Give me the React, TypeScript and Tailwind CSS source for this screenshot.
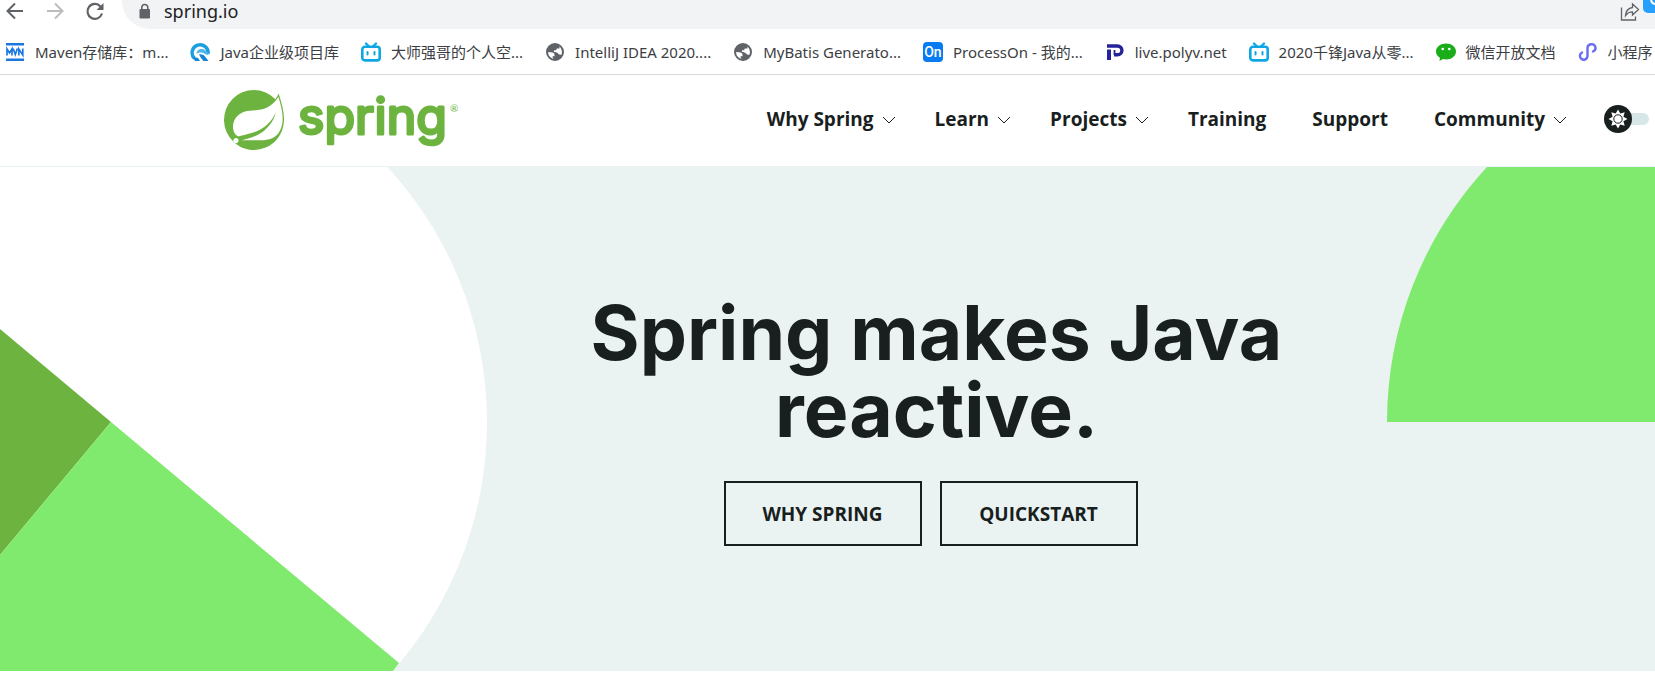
import React from "react";

const MavenIcon = () => (
  <svg viewBox="0 0 20 20" className="size-5" aria-hidden="true">
    <path d="M1 1h18v2.500H1zM1 16.500h18V19H1z" fill="#1a78e0" />
    <path d="M2 13.500V7l2.500 4L7 7v6.500M8.200 6.500l2.100 6 2.100-6M13.800 13.500V7l4 6V6.500" fill="none" stroke="#1a78e0" strokeWidth="1.700" />
  </svg>
);

const JavaProjectIcon = () => (
  <svg viewBox="0 0 20 20" className="size-5" aria-hidden="true">
    <path d="M4.500 16.500A8 8 0 1 1 18 12" fill="none" stroke="#1a9fdf" strokeWidth="3.400" />
    <path d="M6.500 12a5 5 0 0 1 6-5c3 .7 4 3 6.500 4l-1 2c-3-.5-5-3-8-2.500-2 .3-3 1-3.500 1.500z" fill="#4ab6ea" />
    <path d="M9 12.500c2-.8 4.500 0 6 2l3.500 4.500h-5L11 16z" fill="#1583d6" />
    <path d="M3 15l5 1 2 3H5z" fill="#1583d6" />
  </svg>
);

const BilibiliIcon = () => (
  <svg viewBox="0 0 20 20" className="size-5" fill="none" stroke="#0fa7e3" aria-hidden="true">
    <rect x="1.300" y="4.800" width="17.400" height="13.600" rx="2.600" strokeWidth="2.600" />
    <path d="M5 1.500l3 3M15 1.500l-3 3" strokeWidth="2.400" strokeLinecap="round" />
    <path d="M6.500 10v2.500M13.500 10v2.500" strokeWidth="2" strokeLinecap="round" />
  </svg>
);

const GlobeIcon = () => (
  <svg viewBox="0 0 20 20" className="size-5" aria-hidden="true">
    <circle cx="10" cy="10" r="8" fill="#fff" stroke="#5f6368" strokeWidth="2" />
    <path d="M10 2a8 8 0 0 0-8 8l4 .3c2.500.2 3.500 1 3.500 2.500v1.500H7.500c0 1.500 1 3.200 3 3.700 3.500-.5 6-2.500 7-5.500-1.500.5-3.500.3-4.500-1-.8-1-2-1.500-4-1.500V8.300c2 0 2.800-.5 2.800-1.800h2.700V4.500C13.500 3 12 2 10 2z" fill="#5f6368" />
  </svg>
);

const ProcessOnIcon = () => (
  <span className="flex size-5 items-center justify-center rounded-sm bg-[#067bf2] font-['Roboto',sans-serif] text-sm leading-5 font-medium text-white" aria-hidden="true">
    On
  </span>
);

const PolyvIcon = () => (
  <svg viewBox="0 0 20 20" className="size-5" fill="none" stroke="#23239a" aria-hidden="true">
    <path d="M2 4H12.500a4.300 4.300 0 0 1 0 8.800H9" strokeWidth="3.400" />
    <path d="M4 7.500V18" strokeWidth="4" />
    <path d="M9.500 8v5" strokeWidth="1.800" />
  </svg>
);

const WechatIcon = () => (
  <svg viewBox="0 0 20 20" className="size-5" aria-hidden="true">
    <path d="M10 1.500c5.500 0 10 3.500 10 8s-4.500 8-10 8c-1 0-2-.1-3-.4L3.500 19l.4-3.200C1.500 14.300 0 12.200 0 9.500c0-4.500 4.500-8 10-8z" fill="#1aad19" />
    <circle cx="6.700" cy="7" r="1.300" fill="#fff" />
    <circle cx="13.300" cy="7" r="1.300" fill="#fff" />
  </svg>
);

const MiniProgramIcon = () => (
  <svg viewBox="0 0 20 20" className="size-5" aria-hidden="true">
    <path d="M4 10.500A3.800 3.800 0 1 0 9.500 14.200V5.800A4 3.800 0 1 1 15 9.500" fill="none" stroke="#6a6cf0" strokeWidth="2.400" strokeLinecap="round" />
  </svg>
);

const bookmarks: { label: string; icon: React.ReactNode }[] = [
  { label: "Maven存储库：m...", icon: <MavenIcon /> },
  { label: "Java企业级项目库", icon: <JavaProjectIcon /> },
  { label: "大师强哥的个人空...", icon: <BilibiliIcon /> },
  { label: "IntelliJ IDEA 2020....", icon: <GlobeIcon /> },
  { label: "MyBatis Generato...", icon: <GlobeIcon /> },
  { label: "ProcessOn - 我的...", icon: <ProcessOnIcon /> },
  { label: "live.polyv.net", icon: <PolyvIcon /> },
  { label: "2020千锋Java从零...", icon: <BilibiliIcon /> },
  { label: "微信开放文档", icon: <WechatIcon /> },
  { label: "小程序", icon: <MiniProgramIcon /> },
];

function BrowserBar() {
  return (
    <div className="relative border-b border-[#d6d8db] bg-white font-['Noto_Sans','Noto_Sans_CJK_SC',sans-serif]">
      <div className="flex h-[29px] items-start pl-1">
        <button type="button" aria-label="Back" className="flex h-[22px] w-10 items-center pl-px text-[#5f6368]">
          <svg viewBox="0 0 20 20" className="size-5" fill="none" stroke="currentColor" strokeWidth="2">
            <path d="M18 10H3M10 2.500L2.500 10l7.500 7.500" />
          </svg>
        </button>
        <button type="button" aria-label="Forward" className="flex h-[22px] w-10 items-center pl-px text-[#babcbe]">
          <svg viewBox="0 0 20 20" className="size-5" fill="none" stroke="currentColor" strokeWidth="2">
            <path d="M2 10h15M10 2.500l7.500 7.500-7.500 7.500" />
          </svg>
        </button>
        <button type="button" aria-label="Reload" className="flex h-[22px] w-[38px] items-center pl-px text-[#5f6368]">
          <svg viewBox="0 0 20 20" className="size-5" fill="none" stroke="currentColor" strokeWidth="2.200">
            <path d="M17 12.500A7.400 7.400 0 1 1 15.500 5.500" />
            <path d="M18.500 2v7h-7z" fill="currentColor" stroke="none" />
          </svg>
        </button>
        <div className="flex h-[29px] flex-1 items-start gap-3 rounded-bl-[28px] bg-[#f1f3f4] pr-[15px] pl-4">
          <svg viewBox="0 0 14 20" className="mt-px h-5 w-3.5 text-[#5f6368]" aria-hidden="true">
            <rect x="1.500" y="8" width="10.500" height="9.500" rx="1" fill="currentColor" />
            <path d="M3.800 9V6.500a3 3 0 0 1 6 0V9" fill="none" stroke="currentColor" strokeWidth="1.600" />
          </svg>
          <input aria-label="Address" defaultValue="spring.io" className="h-[22px] flex-1 bg-transparent text-lg leading-[22px] text-[#202124] outline-none" />
          <button type="button" aria-label="Share" className="text-[#5f6368]">
            <svg viewBox="0 0 20 20" className="mt-0.5 size-5" fill="none" stroke="currentColor" strokeWidth="1.300">
              <path d="M1.500 5.500v12.500h14v-3.500" />
              <path d="M12.500 2l6 5.500-6 5.500V9.800c-3 0-5 1-7 3.700.3-4.500 3-7.300 7-8z" />
            </svg>
          </button>
        </div>
      </div>
      <svg viewBox="0 0 12 13" className="absolute top-0 right-0 h-[13px] w-3" aria-hidden="true">
        <path d="M0 0H12V13H5A5 5 0 0 1 0 8z" fill="#26a0fc" />
        <path d="M8 0a5 5 0 0 0 4 4" fill="none" stroke="#fff" strokeWidth="2" />
      </svg>
      <nav aria-label="Bookmarks" className="overflow-hidden pl-[5px]">
        <ul className="flex h-[45px] w-max items-center gap-[22px] pt-px text-[15px] text-[#3c4043]">
          {bookmarks.map((b) => (
            <li key={b.label}>
              <a href="#" className="flex items-center gap-2.5 whitespace-nowrap">
                {b.icon}
                {b.label}
              </a>
            </li>
          ))}
        </ul>
      </nav>
    </div>
  );
}

const menu = [
  { label: "Why Spring", dropdown: true },
  { label: "Learn", dropdown: true },
  { label: "Projects", dropdown: true },
  { label: "Training", dropdown: false },
  { label: "Support", dropdown: false },
  { label: "Community", dropdown: true },
];

function SpringLogo() {
  return (
    <svg viewBox="0 0 236 64" className="h-16 w-[236px] overflow-visible" role="img" aria-label="Spring">
      <path
        transform="translate(0 2) scale(2.500)"
        fill="#6db33f"
        d="M21.8537 1.4158a10.4504 10.4504 0 0 1-1.284 2.2471A11.9666 11.9666 0 1 0 3.8518 20.7757l.4445.3951a11.9543 11.9543 0 0 0 19.6316-8.2971c.3457-3.0126-.568-6.8649-2.0742-11.458zM5.5805 20.8745a1.0174 1.0174 0 1 1-.1482-1.4323 1.0396 1.0396 0 0 1 .1482 1.4323zm16.1991-3.5806c-2.9385 3.9263-9.2601 2.5928-13.2852 2.7904 0 0-.7161.0494-1.4323.1481 0 0 .2717-.1234.6174-.2469 2.8398-.9877 4.1732-1.1853 5.9018-2.0743 3.2349-1.6545 6.4698-5.2844 7.1118-9.0379-1.2347 3.6053-4.9881 6.7167-8.3959 7.9761-2.3459.8643-6.5685 1.7039-6.5685 1.7039l-.1729-.0988c-2.8645-1.4076-2.9632-7.6304 2.2718-9.6306 2.2966-.889 4.4696-.395 6.9637-.9877 2.6422-.6174 5.7043-2.5929 6.939-5.1857 1.3828 4.1732 3.062 10.643.0493 14.6434z"
      />
      <text x="74" y="46" className="font-['Inter',sans-serif] text-[50px]" fill="#6db33f" stroke="#6db33f" strokeWidth="3" strokeLinejoin="round">
        spring
      </text>
      <text x="226" y="24" className="font-['Lato',sans-serif] text-[10px]" fill="#6db33f">
        ®
      </text>
    </svg>
  );
}

function Header() {
  return (
    <header className="flex h-[92px] items-center justify-between border-b border-[#ebf2f2] bg-white pr-1.5 pb-1 pl-56 font-['Open_Sans',sans-serif]">
      <a href="#" className="mt-0.5">
        <SpringLogo />
      </a>
      <div className="flex items-center gap-11">
        <nav aria-label="Main" className="pt-0.5">
          <ul className="flex items-center gap-[46px] text-[19px] font-bold text-[#191e1e]">
            {menu.map((m) => (
              <li key={m.label} className={m.dropdown ? "-mr-[7px]" : ""}>
                <a href="#" className="flex items-center gap-2 whitespace-nowrap">
                  {m.label}
                  {m.dropdown && (
                    <svg viewBox="0 0 14 8" className="h-2 w-3.5" fill="none" stroke="#191e1e" aria-hidden="true">
                      <path d="M1 1l6 6 6-6" />
                    </svg>
                  )}
                </a>
              </li>
            ))}
          </ul>
        </nav>
        <label className="flex cursor-pointer items-center">
          <input type="checkbox" role="switch" aria-label="Dark theme" className="sr-only" />
          <span className="flex h-3 w-[45px] items-center rounded-full bg-[#d7e6e6]">
            <svg viewBox="0 0 28 28" className="size-7 shrink-0" aria-hidden="true">
              <circle cx="14" cy="14" r="14" fill="#191e1e" />
              <path d="M14 4.500l2.300 4.100L20.700 7.300l-1.300 4.400L23.500 14l-4.100 2.300L20.700 20.700l-4.400-1.300L14 23.500l-2.300-4.100L7.300 20.700l1.300-4.400L4.500 14l4.100-2.300L7.300 7.300l4.400 1.300z" fill="#fff" />
              <circle cx="14" cy="14" r="4.200" fill="none" stroke="#191e1e" />
            </svg>
          </span>
        </label>
      </div>
    </header>
  );
}

function Hero() {
  return (
    <main className="relative h-[504px] overflow-hidden bg-[#ebf2f2]">
      <svg viewBox="0 0 488 504" className="absolute top-0 left-0 h-[504px] w-[488px]" aria-hidden="true">
        <circle cx="111" cy="255" r="376" fill="#fff" />
        <path d="M111 255L0 162V388z" fill="#6db33f" />
        <path d="M111 255L399 496L393 504H0V388z" fill="#80ea6e" />
      </svg>
      <svg viewBox="0 0 268 255" className="absolute top-0 right-0 h-[255px] w-[268px]" aria-hidden="true">
        <path d="M0 255A376 376 0 0 1 100 0H268V255z" fill="#80ea6e" />
      </svg>
      <div className="relative flex flex-col items-center pt-[127px] pr-1.5 pl-56">
        <h1 className="max-w-[760px] text-center font-['Inter',sans-serif] text-[75px] leading-[77px] font-bold text-[#191e1e]">
          Spring makes Java reactive.
        </h1>
        <div className="mt-[33px] flex gap-[18px] pr-3 font-['Open_Sans',sans-serif] text-[19px] font-bold text-[#191e1e]">
          <a href="#" className="flex h-[65px] w-[198px] items-center justify-center border-2 border-[#191e1e] pt-0.5">
            WHY SPRING
          </a>
          <a href="#" className="flex h-[65px] w-[198px] items-center justify-center border-2 border-[#191e1e] pt-0.5">
            QUICKSTART
          </a>
        </div>
      </div>
    </main>
  );
}

export default function App() {
  return (
    <div className="min-h-screen bg-white">
      <BrowserBar />
      <Header />
      <Hero />
    </div>
  );
}
